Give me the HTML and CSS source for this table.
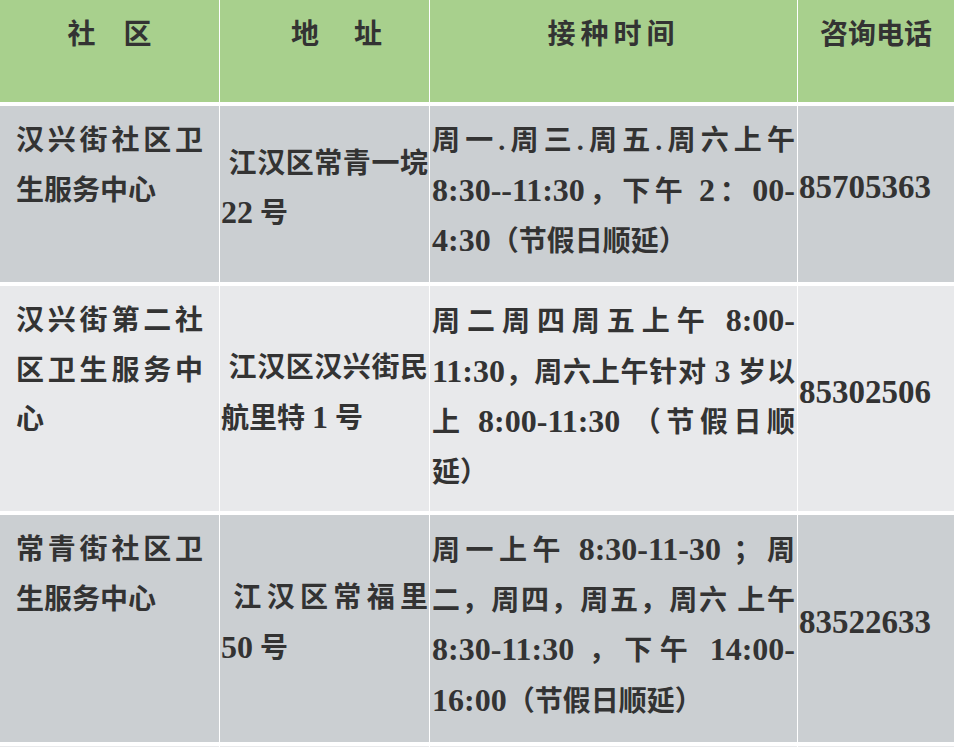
FILE: index.html
```html
<!DOCTYPE html>
<html lang="zh-CN">
<head>
<meta charset="utf-8">
<title>社区接种时间</title>
<link rel="stylesheet" href="styles.css">
</head>
<body>
<div class="sheet">
  <div class="cell head">社&#12288;区</div>
  <div class="cell head head-addr">地&#12288; 址</div>
  <div class="cell head head-time">接种时间</div>
  <div class="cell head">咨询电话</div>

  <div class="cell dark name">汉兴街社区卫生服务中心</div>
  <div class="cell dark addr"><p>&nbsp;江汉区常青一垸<span class="n">22</span> 号</p></div>
  <div class="cell dark time">周一.周三.周五.周六上午<span class="n">8:30--11:30</span>，下午 <span class="n">2</span>：<span class="n">00-&#8203;4:30</span>（节假日顺延）</div>
  <div class="cell dark tel"><p><span class="n">85705363</span></p></div>

  <div class="cell light name">汉兴街第二社区卫生服务中心</div>
  <div class="cell light addr"><p>&nbsp;江汉区汉兴街民航里特 <span class="n">1</span> 号</p></div>
  <div class="cell light time">周二周四周五上午 <span class="n">8:00-&#8203;11:30</span>，周六上午针对 <span class="n">3</span> 岁以上 <span class="n">8:00-11:30</span> （节<wbr>假<wbr>日<wbr>顺<wbr>延）</div>
  <div class="cell light tel"><p><span class="n">85302506</span></p></div>

  <div class="cell dark name">常青街社区卫生服务中心</div>
  <div class="cell dark addr"><p>&nbsp;江汉区常福里 <span class="n">50</span> 号</p></div>
  <div class="cell dark time">周一上午 <span class="n">8:30-11-30</span> ；周二，周四，周五，周六 上午<span class="n">8:30-11:30</span> ，下午 <span class="n">14:00-&#8203;16:00</span>（节假日顺延）</div>
  <div class="cell dark tel"><p><span class="n">83522633</span></p></div>

  <div class="cell light tail"></div>
  <div class="cell light tail"></div>
  <div class="cell light tail"></div>
  <div class="cell light tail"></div>
</div>
</body>
</html>
```
FILE: styles.css
```css
html, body {
  margin: 0;
  padding: 0;
}

body {
  background: #ffffff;
  font-family: "Liberation Serif", "Noto Sans CJK SC", serif;
  font-size: 28px;
  font-weight: 700;
  color: #333333;
  overflow: hidden;
}

.sheet {
  display: grid;
  grid-template-columns: 219px 209px 367px 156px;
  grid-template-rows: 102px 176px 225px 227px 1px;
  column-gap: 1px;
  row-gap: 4px;
  height: 747px;
}

.cell {
  box-sizing: border-box;
  line-height: 49.5px;
  padding: 10px 2px 21px;
  text-align: justify;
  overflow: hidden;
}

.cell p {
  margin: 0;
}

.head {
  background: #a8d08d;
  text-align: center;
}

.head-addr {
  padding-left: 26px;
}

.head-time {
  letter-spacing: 5px;
}

.dark {
  background: #cbcfd2;
}

.light {
  background: #e8e9eb;
}

.name {
  padding-left: 16px;
  padding-right: 16px;
}

.addr {
  padding-left: 1px;
  padding-right: 1px;
  display: flex;
  flex-direction: column;
  justify-content: center;
}

.time {
  padding-left: 2px;
  padding-right: 2px;
}

.tel {
  padding-left: 1px;
  padding-right: 1px;
  display: flex;
  flex-direction: column;
  justify-content: center;
}

.tail {
  padding: 0;
}

.n {
  font-size: 32px;
}

.tel .n {
  font-size: 33px;
}
```
